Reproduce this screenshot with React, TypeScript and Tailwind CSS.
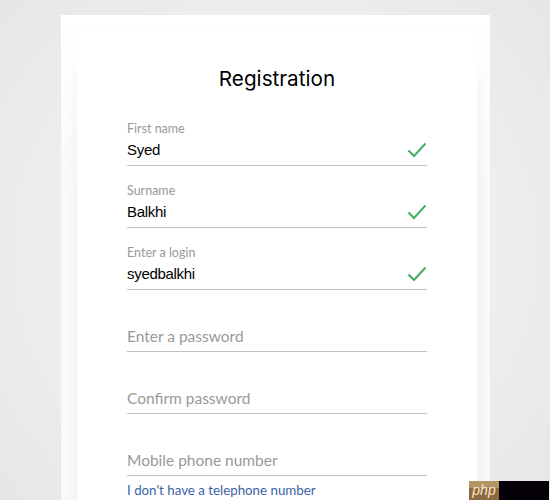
type FieldProps = {
  label: string
  value?: string
}

function Field({ label, value }: FieldProps) {
  if (value) {
    return (
      <div className="h-[62px] flex flex-col justify-end">
        <div className="border-b border-[#c4c4c4] h-[46px] pt-[1px] relative">
          <div className="font-['Lato',sans-serif] text-[12.5px] leading-[16px] text-[#999999]">{label}</div>
          <div className="mt-[1px] font-['Liberation_Sans',sans-serif] text-[15px] tracking-[-0.3px] leading-[24px] text-black">{value}</div>
          <svg className="absolute right-0 top-[22px] h-[16px] w-[20px]" viewBox="0 0 20 16" fill="none">
            <path d="M1.5 8.5 L7 14 L18.5 1.5" stroke="#45ae5e" strokeWidth="2" />
          </svg>
        </div>
      </div>
    )
  }
  return (
    <div className="h-[62px] flex flex-col justify-end">
      <div className="border-b border-[#c4c4c4] h-[30px] font-['Lato',sans-serif] text-[15.5px] leading-[28px] text-[#999999]">
        {label}
      </div>
    </div>
  )
}

export default function App() {
  return (
    <div className="h-[500px] w-[550px] overflow-hidden bg-[radial-gradient(circle_at_50%_50%,#f4f4f4_0%,#eeeeee_60%,#e6e6e6_100%)] pt-[15px] pl-[61px]">
      <div className="h-[500px] w-[429px] bg-[linear-gradient(to_bottom,#ffffff_0%,#fdfdfd_15%,#f9f9f9_35%,#f9f9f9_100%)] pt-[17px] pl-[16px]">
        <div className="relative h-[470px] w-[400px] bg-white px-[50px] shadow-[0_40px_14px_rgba(0,0,0,0.05)]">
          <h1 className="pt-[32px] text-center font-['Inter',sans-serif] text-[20.7px] leading-[30px] font-normal text-black">
            Registration
          </h1>
          <div className="mt-[10px]">
            <Field label="First name" value="Syed" />
            <Field label="Surname" value="Balkhi" />
            <Field label="Enter a login" value="syedbalkhi" />
            <Field label="Enter a password" />
            <Field label="Confirm password" />
            <Field label="Mobile phone number" />
          </div>
          <a href="#" className="mt-[5px] block font-['Lato',sans-serif] text-[13.3px] leading-[18px] text-[#3b62a8]">
            I don't have a telephone number
          </a>
        </div>
      </div>
      <div className="absolute left-[469px] top-[481px] flex h-[19px] w-[80px]">
        <div className="flex w-[30px] items-center justify-center bg-[linear-gradient(to_bottom,#b39566_0%,#b39566_35%,#8a6a3e_35%,#8a6a3e_100%)] font-['Liberation_Sans',sans-serif] text-[14px] italic text-[#ffe6cc]">
          php
        </div>
        <div className="w-[50px] bg-[#050007]" />
      </div>
    </div>
  )
}
